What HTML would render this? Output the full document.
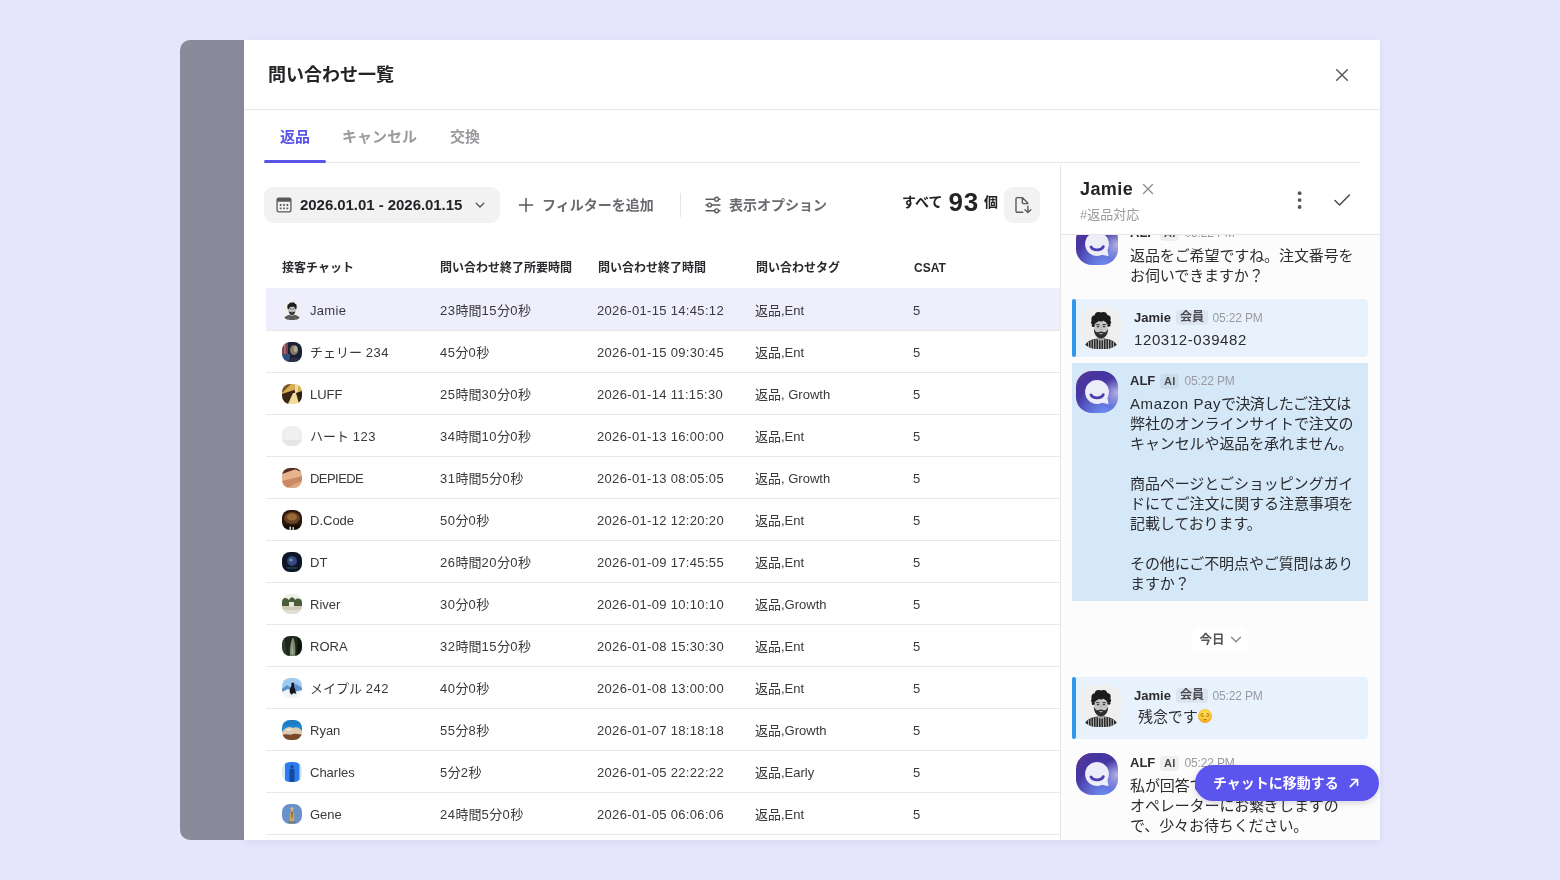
<!DOCTYPE html>
<html lang="ja">
<head>
<meta charset="utf-8">
<title>問い合わせ一覧</title>
<style>
*{box-sizing:border-box;margin:0;padding:0}
html,body{width:1560px;height:880px;overflow:hidden}
body{background:#e5e5fc;font-family:"Liberation Sans","Noto Sans CJK JP",sans-serif;color:#242428;position:relative}
.abs{position:absolute}
#strip{left:180px;top:40px;width:70px;height:800px;background:#8b8a9b;border-radius:10px 0 0 10px}
#panel{left:244px;top:40px;width:1136px;height:800px;background:#fff;overflow:hidden;box-shadow:0 2px 7px rgba(70,70,150,.08)}
#title{left:24px;top:22px;font-size:18px;font-weight:700;line-height:26px;letter-spacing:0}
#hline{left:0;top:69px;width:1136px;height:1px;background:#e8e8ea}
#close{left:1088px;top:25px}
.tab{top:85px;font-size:15px;font-weight:700;line-height:24px;color:#9a9a9e}
.tab.on{color:#5b54e8}
#tabline{left:20px;top:122px;width:1096px;height:1px;background:#e8e8ea}
#tabul{left:20px;top:120px;width:62px;height:3px;border-radius:2px;background:#5b54e8}
#datebtn{left:20px;top:147px;width:236px;height:36px;border-radius:9px;background:#f2f2f3}
.tb{margin-top:-.5px;font-size:14px;font-weight:700;line-height:20px;color:#6a6a70;white-space:nowrap}
#vsep{left:436px;top:153px;width:1px;height:24px;background:#e4e4e6}
#dl{left:760px;top:147px;width:36px;height:36px;border-radius:9px;background:#f2f2f3}
.th{top:219px;font-size:12px;font-weight:700;line-height:18px;color:#2a2a2e;white-space:nowrap}
.row{left:22px;width:794px;height:42px;border-bottom:1px solid #e9e9eb}
.row.sel{background:#efeefd;margin-top:-1px;height:43px}
.row.sel span{top:13px}
.row.sel i{top:12px}
.row span{position:absolute;top:12px;font-size:13px;line-height:20px;color:#38383d;white-space:nowrap}
.row i{position:absolute;left:16px;top:11px;width:20px;height:20px;border-radius:8px;display:block;overflow:hidden}
.row b{font-weight:400;letter-spacing:.55px}
.c1{left:44px}.c2{left:174px}.c3{left:331px;letter-spacing:.33px}.c4{left:489px}.c5{left:647px}
#side{left:817px;top:123px;width:319px;height:677px;background:#fcfcfc;overflow:hidden}
#sideline{left:816px;top:125px;width:1px;height:675px;background:#e6e6e8}
#shead{left:0;top:0;width:319px;height:72px;background:#fff;border-bottom:1px solid #e6e6e8;z-index:3}
.msg{font-size:15px;line-height:20px;color:#2c2c30;white-space:nowrap;margin-top:1px;letter-spacing:-.1px}
.msg u{text-decoration:none;letter-spacing:-.6px}
.msg b{font-weight:400;letter-spacing:.6px}
.nm{font-size:13px;font-weight:700;line-height:18px;color:#2c2c30;white-space:nowrap;margin-top:1px}
.badge{font-size:12px;font-weight:700;line-height:16px;color:#4a4a50;background:rgba(0,0,0,.05);border-radius:4px;padding:0 4px;white-space:nowrap;margin-top:.5px;line-height:15px}
.badge.ai{font-size:11px;padding:0 4px;letter-spacing:.2px;margin-top:1.5px}
.tm{font-size:12px;line-height:16px;color:#9a9aa0;white-space:nowrap;letter-spacing:-.15px;margin-left:.5px;margin-top:1px}
s{position:absolute;left:0;top:0;width:4px;height:100%;background:#2f98ea;border-radius:2px;display:block}
.alf{width:42px;height:42px;border-radius:16px;background:radial-gradient(circle at 98% 52%,rgba(190,190,236,.9) 0%,rgba(190,190,236,0) 34%),radial-gradient(circle at 66% 104%,#6f8ef2 0%,rgba(111,142,242,.6) 30%,rgba(111,142,242,0) 60%),linear-gradient(135deg,#5c3490 0%,#4636a2 30%,#4638a8 100%)}
.jam{width:42px;height:42px;border-radius:16px;overflow:hidden;background:#ececec}
</style>
</head>
<body>
<div id="root" class="abs" style="left:0;top:0;width:1560px;height:880px;will-change:transform">
<div id="strip" class="abs"></div>
<div id="panel" class="abs">
  <div id="title" class="abs">問い合わせ一覧</div>
  <svg id="close" class="abs" width="20" height="20" viewBox="0 0 20 20"><path d="M4.7 4.7 L15.3 15.3 M15.3 4.7 L4.7 15.3" stroke="#5a5a5c" stroke-width="1.5" fill="none" stroke-linecap="round"/></svg>
  <div id="hline" class="abs"></div>

  <div class="tab on abs" style="left:36px">返品</div>
  <div class="tab abs" style="left:98px">キャンセル</div>
  <div class="tab abs" style="left:206px">交換</div>
  <div id="tabline" class="abs"></div>
  <div id="tabul" class="abs"></div>

  <div id="datebtn" class="abs"></div>
  <svg class="abs" style="left:31px;top:156px" width="18" height="18" viewBox="0 0 18 18"><rect x="2.1" y="2.1" width="13.8" height="13.8" rx="1.6" fill="none" stroke="#5a5a5f" stroke-width="1.3"/><rect x="2.1" y="2.1" width="13.8" height="3.6" rx="0.8" fill="#5a5a5f"/><g fill="#5a5a5f"><rect x="4.7" y="8.1" width="1.8" height="1.8" rx=".4"/><rect x="8.1" y="8.1" width="1.8" height="1.8" rx=".4"/><rect x="11.5" y="8.1" width="1.8" height="1.8" rx=".4"/><rect x="4.7" y="11.4" width="1.8" height="1.8" rx=".4"/><rect x="8.1" y="11.4" width="1.8" height="1.8" rx=".4"/><rect x="11.5" y="11.4" width="1.8" height="1.8" rx=".4"/></g></svg>
  <div class="abs" style="left:56px;top:155px;font-size:15px;font-weight:700;line-height:20px;color:#242428;white-space:nowrap;letter-spacing:-0.05px">2026.01.01 - 2026.01.15</div>
  <svg class="abs" style="left:230px;top:159px" width="12" height="12" viewBox="0 0 12 12"><path d="M2.1 4.1 L6 8 L9.9 4.1" stroke="#4a4a50" stroke-width="1.3" fill="none" stroke-linecap="round" stroke-linejoin="round"/></svg>

  <svg class="abs" style="left:273px;top:156px" width="18" height="18" viewBox="0 0 18 18"><path d="M9 2.4 V15.6 M2.4 9 H15.6" stroke="#5a5a5f" stroke-width="1.5" fill="none" stroke-linecap="round"/></svg>
  <div class="tb abs" style="left:298px;top:155px">フィルターを追加</div>
  <div id="vsep" class="abs"></div>
  <svg class="abs" style="left:459px;top:155px" width="20" height="20" viewBox="0 0 20 20"><g stroke="#5a5a5f" stroke-width="1.4" fill="#fff" stroke-linecap="round"><path d="M3 4.2 H17 M3 10 H17 M3 15.8 H17"/><circle cx="13.6" cy="4.2" r="1.9"/><circle cx="6.6" cy="10" r="1.9"/><circle cx="13.6" cy="15.8" r="1.9"/></g></svg>
  <div class="tb abs" style="left:485px;top:155px">表示オプション</div>

  <div class="abs" style="left:658px;top:152.400px;font-size:14px;font-weight:700;line-height:20px;color:#242428;white-space:nowrap">すべて</div>
  <div class="abs" style="left:704.5px;top:146px;font-size:26px;font-weight:700;line-height:32px;color:#242428;white-space:nowrap;letter-spacing:0.8px">93</div>
  <div class="abs" style="left:740px;top:152.400px;font-size:14px;font-weight:700;line-height:20px;color:#242428;white-space:nowrap">個</div>
  <div id="dl" class="abs"></div>
  <svg class="abs" style="left:768px;top:155px" width="20" height="20" viewBox="0 0 20 20"><path d="M10.800 17.300 H5.200 a1.200 1.200 0 0 1 -1.200 -1.200 V3.800 a1.200 1.200 0 0 1 1.200 -1.200 H10.300 L15.800 8.100 V8.600 H11.300 a1 1 0 0 1 -1 -1 V2.600 M15.900 11.200 V17.400 M13 14.700 L15.900 17.600 L18.800 14.700" stroke="#5a5a5f" stroke-width="1.4" fill="none" stroke-linejoin="round" stroke-linecap="round"/></svg>

  <div class="th abs" style="left:38px">接客チャット</div>
  <div class="th abs" style="left:196px">問い合わせ終了所要時間</div>
  <div class="th abs" style="left:354px">問い合わせ終了時間</div>
  <div class="th abs" style="left:512px">問い合わせタグ</div>
  <div class="th abs" style="left:670px">CSAT</div>

  <div class="row sel abs" style="top:249px"><i style="background:#ececec"><svg width="20" height="20" viewBox="0 0 42 42"><use href="#jamface"/></svg></i><span class="c1" style="letter-spacing:.3px">Jamie</span><span class="c2"><b>23</b>時間<b>15</b>分<b>0</b>秒</span><span class="c3">2026-01-15 14:45:12</span><span class="c4">返品,Ent</span><span class="c5">5</span></div>
  <div class="row abs" style="top:291px"><i><svg width="20" height="20" viewBox="0 0 20 20"><g filter="url(#bl)"><rect width="20" height="20" fill="#1b2236"/><rect x="0" y="0" width="6" height="13" fill="#7a454c"/><rect x="2" y="2" width="1.5" height="10" fill="#b0707a"/><rect x="0" y="12" width="8" height="8" fill="#2f4f80"/><ellipse cx="12" cy="8" rx="4" ry="5" fill="#857a68"/><ellipse cx="13.5" cy="7" rx="2" ry="3" fill="#b5a890"/><path d="M6 20 C7 14 17 14 19 20Z" fill="#2a3040"/></g></svg></i><span class="c1">チェリー <b>234</b></span><span class="c2"><b>45</b>分<b>0</b>秒</span><span class="c3">2026-01-15 09:30:45</span><span class="c4">返品,Ent</span><span class="c5">5</span></div>
  <div class="row abs" style="top:333px"><i><svg width="20" height="20" viewBox="0 0 20 20"><g filter="url(#bl)"><rect width="20" height="20" fill="#d5ae55"/><path d="M0 0 H9 L0 9Z" fill="#7a5424"/><path d="M0 10 L12 6 L20 12 V20 H0Z" fill="#3a2614"/><path d="M6 20 L11 9 L14 9 L17 20Z" fill="#efdc9c"/><rect x="13" y="0" width="3" height="9" fill="#f0dca0"/><path d="M14 9 L20 7 V16Z" fill="#2e1e10"/></g></svg></i><span class="c1">LUFF</span><span class="c2"><b>25</b>時間<b>30</b>分<b>0</b>秒</span><span class="c3">2026-01-14 11:15:30</span><span class="c4">返品, Growth</span><span class="c5">5</span></div>
  <div class="row abs" style="top:375px"><i><svg width="20" height="20" viewBox="0 0 20 20"><g filter="url(#bl)"><rect width="20" height="20" fill="#ededed"/><rect x="0" y="14.5" width="20" height="1" fill="#d9d9d9"/><rect x="0" y="15.5" width="20" height="4.5" fill="#e6e6e6"/><rect x="3" y="1" width="14" height="13" rx="3" fill="#f0f0f0"/></g></svg></i><span class="c1">ハート <b>123</b></span><span class="c2"><b>34</b>時間<b>10</b>分<b>0</b>秒</span><span class="c3">2026-01-13 16:00:00</span><span class="c4">返品,Ent</span><span class="c5">5</span></div>
  <div class="row abs" style="top:417px"><i><svg width="20" height="20" viewBox="0 0 20 20"><g filter="url(#bl)"><rect width="20" height="20" fill="#5a2a20"/><path d="M0 6 L14 1 L20 4 L20 9 L0 14Z" fill="#e6b48c"/><path d="M0 13 L20 8 V14 L2 20 H0Z" fill="#c98a64"/><path d="M3 20 L20 13 V20Z" fill="#e0a880"/><path d="M10 0 H20 V4 Z" fill="#3a1812"/><path d="M0 0 H6 L0 5Z" fill="#3a1812"/></g></svg></i><span class="c1" style="letter-spacing:-.55px">DEPIEDE</span><span class="c2"><b>31</b>時間<b>5</b>分<b>0</b>秒</span><span class="c3">2026-01-13 08:05:05</span><span class="c4">返品, Growth</span><span class="c5">5</span></div>
  <div class="row abs" style="top:459px"><i><svg width="20" height="20" viewBox="0 0 20 20"><g filter="url(#bl)"><rect width="20" height="20" fill="#2a180c"/><ellipse cx="10" cy="8" rx="8" ry="6" fill="#6a4222"/><ellipse cx="10" cy="7" rx="5" ry="3.5" fill="#9a6a38"/><rect x="0" y="15" width="20" height="5" fill="#120a06"/><rect x="7.5" y="16.5" width="1.4" height="3.5" fill="#e8e8e8"/><rect x="10.5" y="17" width="1.4" height="3" fill="#d8d8d8"/></g></svg></i><span class="c1">D.Code</span><span class="c2"><b>50</b>分<b>0</b>秒</span><span class="c3">2026-01-12 12:20:20</span><span class="c4">返品,Ent</span><span class="c5">5</span></div>
  <div class="row abs" style="top:501px"><i><svg width="20" height="20" viewBox="0 0 20 20"><g filter="url(#bl)"><rect width="20" height="20" fill="#0b1326"/><circle cx="10" cy="9" r="5" fill="#27506a"/><circle cx="10" cy="9" r="3.4" fill="#4a3f95"/><circle cx="9" cy="8" r="1.6" fill="#4fb0a0"/><rect x="5" y="15.5" width="10" height="1" fill="#2a5a6a"/></g></svg></i><span class="c1">DT</span><span class="c2"><b>26</b>時間<b>20</b>分<b>0</b>秒</span><span class="c3">2026-01-09 17:45:55</span><span class="c4">返品,Ent</span><span class="c5">5</span></div>
  <div class="row abs" style="top:543px"><i><svg width="20" height="20" viewBox="0 0 20 20"><g filter="url(#bl)"><rect width="20" height="20" fill="#eef0ea"/><path d="M0 6 C3 3 5 4 7 6 C9 2 12 3 13 6 C15 4 18 4 20 7 V13 H0Z" fill="#4c5c3a"/><rect x="0" y="12" width="20" height="8" fill="#cfcab8"/><rect x="7" y="8" width="5" height="5" fill="#e8e4d8"/><rect x="0" y="16" width="20" height="4" fill="#e2dfd4"/></g></svg></i><span class="c1">River</span><span class="c2"><b>30</b>分<b>0</b>秒</span><span class="c3">2026-01-09 10:10:10</span><span class="c4">返品,Growth</span><span class="c5">5</span></div>
  <div class="row abs" style="top:585px"><i><svg width="20" height="20" viewBox="0 0 20 20"><g filter="url(#bl)"><rect width="20" height="20" fill="#1b261a"/><path d="M8 20 C7 12 9 5 11 1 C13 5 14 12 13 20Z" fill="#78866c"/><path d="M2 0 L5 20 H0 V0Z" fill="#2e3c28"/><path d="M16 0 L14.5 20 H20 V0Z" fill="#101810"/><path d="M10 3 L11.5 18 L9.5 18Z" fill="#a8b09a"/></g></svg></i><span class="c1">RORA</span><span class="c2"><b>32</b>時間<b>15</b>分<b>0</b>秒</span><span class="c3">2026-01-08 15:30:30</span><span class="c4">返品,Ent</span><span class="c5">5</span></div>
  <div class="row abs" style="top:627px"><i><svg width="20" height="20" viewBox="0 0 20 20"><g filter="url(#bl)"><rect width="20" height="20" fill="#9fcbf0"/><path d="M0 11 L5 7 L9 10 L14 6 L20 10 V20 H0Z" fill="#5f8fc8"/><path d="M0 14 L6 11 L12 14 L20 12 V20 H0Z" fill="#eef4fa"/><path d="M8 15 C7 11 9 9 10 6.5 C11.5 5.5 13 7 12 9 C14 11 13 14 14.5 16 L11 15 L10 17Z" fill="#181820"/><circle cx="10.8" cy="6" r="1.6" fill="#181820"/></g></svg></i><span class="c1">メイプル <b>242</b></span><span class="c2"><b>40</b>分<b>0</b>秒</span><span class="c3">2026-01-08 13:00:00</span><span class="c4">返品,Ent</span><span class="c5">5</span></div>
  <div class="row abs" style="top:669px"><i><svg width="20" height="20" viewBox="0 0 20 20"><g filter="url(#bl)"><rect width="20" height="20" fill="#1e88d2"/><rect x="0" y="0" width="20" height="5" fill="#1a7cc6"/><path d="M0 12 C3 7 8 6 11 8 C14 6 18 8 20 11 V20 H0Z" fill="#dccbb0"/><path d="M0 15 C5 13 8 16 11 14 C14 13 17 15 20 14 V20 H0Z" fill="#7a4a2c"/><path d="M4 11 C6 8 9 8 10 10Z" fill="#f2e8d8"/></g></svg></i><span class="c1">Ryan</span><span class="c2"><b>55</b>分<b>8</b>秒</span><span class="c3">2026-01-07 18:18:18</span><span class="c4">返品,Growth</span><span class="c5">5</span></div>
  <div class="row abs" style="top:711px"><i><svg width="20" height="20" viewBox="0 0 20 20"><g filter="url(#bl)"><rect width="20" height="20" fill="#2b7cf0"/><rect x="0" y="0" width="3" height="20" fill="#dbe8fb"/><rect x="17.5" y="0" width="2.5" height="20" fill="#dbe8fb"/><path d="M7.5 20 V9 C7.5 7 8.5 6.5 10 6.5 C11.5 6.5 12.5 7 12.5 9 V20Z" fill="#184a9c"/><circle cx="10" cy="4.6" r="1.7" fill="#184a9c"/></g></svg></i><span class="c1">Charles</span><span class="c2"><b>5</b>分<b>2</b>秒</span><span class="c3">2026-01-05 22:22:22</span><span class="c4">返品,Early</span><span class="c5">5</span></div>
  <div class="row abs" style="top:753px"><i><svg width="20" height="20" viewBox="0 0 20 20"><g filter="url(#bl)"><rect width="20" height="20" fill="#6b92ca"/><path d="M8 17 C7 12 8 8 10 5 C12 8 13 12 12 17Z" fill="#c9a85c"/><circle cx="10" cy="4.6" r="1.6" fill="#d8bc74"/><path d="M6 17.5 H14 V19 H6Z" fill="#8a7a50"/><path d="M9 8 L11 8 L10.5 14 L9.5 14Z" fill="#8a6a30"/></g></svg></i><span class="c1">Gene</span><span class="c2"><b>24</b>時間<b>5</b>分<b>0</b>秒</span><span class="c3">2026-01-05 06:06:06</span><span class="c4">返品,Ent</span><span class="c5">5</span></div>

  <div id="sideline" class="abs"></div>
  <div id="side" class="abs">
    <svg width="0" height="0" style="position:absolute"><defs>
<filter id="bl2" x="-5%" y="-5%" width="110%" height="110%"><feGaussianBlur stdDeviation="0.35"/></filter>
<filter id="bl" x="-10%" y="-10%" width="120%" height="120%"><feGaussianBlur stdDeviation="0.6"/></filter>
<symbol id="jamface" viewBox="0 0 42 42"><rect width="42" height="42" fill="#efefef"/><g filter="url(#bl2)"><path d="M3.5 43 C4.5 34.5 12 31.2 21 31.2 C30 31.2 37.5 34.5 38.5 43 Z" fill="#2b2b2b"/><g stroke="#cfcfcf" stroke-width="0.8"><path d="M8.5 35 V43 M11 33.6 V43 M13.5 32.6 V43 M16 32 V43 M18.5 31.6 V43 M21 31.5 V43 M23.500 31.6 V43 M26 32 V43 M28.500 32.6 V43 M31 33.600 V43 M33.500 35 V43"/></g><path d="M17.500 27 H24.500 V32.5 C22.500 34 19.500 34 17.500 32.500 Z" fill="#a9a9a9"/><ellipse cx="21" cy="19.800" rx="7.200" ry="9" fill="#c6c6c6"/><path d="M13.800 21.500 C14 28.500 17.500 31.400 21 31.400 C24.500 31.400 28 28.500 28.200 21.500 C26.800 25.200 24.600 25.600 23.600 25.200 C22 24.400 20 24.400 18.400 25.200 C17.400 25.600 15.200 25.200 13.800 21.500 Z" fill="#2e2e2e"/><path d="M18.800 26.600 C20 25.800 22 25.800 23.200 26.600 C22.400 27.600 19.600 27.600 18.800 26.600Z" fill="#b4b4b4"/><g fill="#1c1c1c"><circle cx="15.200" cy="12" r="3.800"/><circle cx="18.600" cy="9" r="3.900"/><circle cx="23.400" cy="8.800" r="3.900"/><circle cx="27" cy="11.600" r="3.700"/><circle cx="13.400" cy="15.600" r="2.400"/><circle cx="28.700" cy="15.400" r="2.400"/><circle cx="21" cy="11" r="3.600"/><circle cx="13.200" cy="18.400" r="1.500"/><circle cx="28.900" cy="18.200" r="1.500"/></g><path d="M16.200 17.700 H19.600 M22.400 17.700 H25.800" stroke="#2a2a2a" stroke-width="1"/><path d="M16.800 19.600 H19.200 M22.800 19.600 H25.200" stroke="#3a3a3a" stroke-width="1.100"/><path d="M21 19 V23" stroke="#a8a8a8" stroke-width="0.900"/></g></symbol>
<symbol id="alfface" viewBox="0 0 42 42"><circle cx="21" cy="21" r="11.9" fill="#edecf9"/><path d="M31.200 26 L32.500 32.400 C32.600 33 32.200 33.300 31.700 33.100 L24.500 31.600 Z" fill="#edecf9"/><path d="M15 23.900 C17 28 25.300 28 27.300 23.600" stroke="#4a40b4" stroke-width="2.8" fill="none" stroke-linecap="round"/></symbol>
</defs></svg>
    <div id="shead" class="abs">
    <div class="abs" style="left:19px;top:13px;font-size:18px;font-weight:700;line-height:26px;color:#242428;letter-spacing:0.4px">Jamie</div>
    <svg class="abs" style="left:80px;top:19px" width="14" height="14" viewBox="0 0 14 14"><path d="M2.5 2.5 L11.5 11.5 M11.5 2.5 L2.5 11.5" stroke="#8a8a90" stroke-width="1.3" fill="none" stroke-linecap="round"/></svg>
    <div class="abs" style="left:19px;top:43px;font-size:13px;line-height:18px;color:#9a9aa0;white-space:nowrap">#返品対応</div>
    <svg class="abs" style="left:228px;top:27px" width="20" height="20" viewBox="0 0 20 20"><g fill="#55555a"><circle cx="10.6" cy="3.2" r="1.9"/><circle cx="10.6" cy="10.1" r="1.9"/><circle cx="10.6" cy="17" r="1.9"/></g></svg>
    <svg class="abs" style="left:271px;top:27px" width="20" height="20" viewBox="0 0 20 20"><path d="M3 10.5 L7.6 15 L17.4 5" stroke="#4a4a50" stroke-width="1.5" fill="none" stroke-linecap="round" stroke-linejoin="round"/></svg>
    </div>
    <div class="alf abs" style="left:15px;top:60px"><svg width="42" height="42" viewBox="0 0 42 42"><use href="#alfface"/></svg></div>
    <div class="nm abs" style="left:69px;top:60px">ALF</div>
    <div class="badge ai abs" style="left:99px;top:61px">AI</div>
    <div class="tm abs" style="left:123px;top:61px">05:22 PM</div>
    <div class="msg abs" style="left:69px;top:82px">返品をご希望ですね。注文番号を</div>
    <div class="msg abs" style="left:69px;top:102px">お伺いできますか？</div>
    <div class="abs" style="left:11px;top:136px;width:296px;height:58px;background:#e8f2fc;border-radius:4px"><s></s></div>
    <div class="jam abs" style="left:19px;top:144px"><svg width="42" height="42" viewBox="0 0 42 42"><use href="#jamface"/></svg></div>
    <div class="nm abs" style="left:73px;top:145px">Jamie</div>
    <div class="badge abs" style="left:115px;top:146px">会員</div>
    <div class="tm abs" style="left:151px;top:146px">05:22 PM</div>
    <div class="msg abs" style="left:73px;top:166px"><b>120312-039482</b></div>
    <div class="abs" style="left:11px;top:200px;width:296px;height:238px;background:#d5e8f8"></div>
    <div class="alf abs" style="left:15px;top:208px"><svg width="42" height="42" viewBox="0 0 42 42"><use href="#alfface"/></svg></div>
    <div class="nm abs" style="left:69px;top:208px">ALF</div>
    <div class="badge ai abs" style="left:99px;top:209px">AI</div>
    <div class="tm abs" style="left:123px;top:209px">05:22 PM</div>
    <div class="msg abs" style="left:69px;top:230px"><b>Amazon Pay</b><u>で決済したご注文は</u></div>
    <div class="msg abs" style="left:69px;top:250px">弊社のオンラインサイトで注文の</div>
    <div class="msg abs" style="left:69px;top:270px">キャンセルや返品を承れません。</div>
    <div class="msg abs" style="left:69px;top:310px">商品ページとごショッピングガイ</div>
    <div class="msg abs" style="left:69px;top:330px">ドにてご注文に関する注意事項を</div>
    <div class="msg abs" style="left:69px;top:350px">記載しております。</div>
    <div class="msg abs" style="left:69px;top:390px">その他にご不明点やご質問はあり</div>
    <div class="msg abs" style="left:69px;top:410px">ますか？</div>
    <div class="abs" style="left:131px;top:464px;width:56px;height:24px;background:#fff;border-radius:8px"></div>
    <div class="abs" style="left:139px;top:468px;font-size:12.5px;font-weight:700;line-height:16px;color:#55555a;white-space:nowrap;margin:.5px 0 0 -.5px">今日</div>
    <svg class="abs" style="left:169px;top:470px" width="12" height="12" viewBox="0 0 12 12"><path d="M1.5 3.8 L6 8.3 L10.5 3.8" stroke="#85858b" stroke-width="1.3" transform="translate(0 .4)" fill="none" stroke-linecap="round" stroke-linejoin="round"/></svg>
    <div class="abs" style="left:11px;top:514px;width:296px;height:62px;background:#e8f2fc;border-radius:4px"><s></s></div>
    <div class="jam abs" style="left:19px;top:522px"><svg width="42" height="42" viewBox="0 0 42 42"><use href="#jamface"/></svg></div>
    <div class="nm abs" style="left:73px;top:523px">Jamie</div>
    <div class="badge abs" style="left:115px;top:524px">会員</div>
    <div class="tm abs" style="left:151px;top:524px">05:22 PM</div>
    <div class="msg abs" style="left:77px;top:543px">残念です<svg width="14" height="14" viewBox="0 0 14 14" style="vertical-align:-1.300px;margin-left:.4px" role="img" aria-label="😔"><defs><radialGradient id="emo" cx="50%" cy="35%" r="65%"><stop offset="0" stop-color="#ffe458"/><stop offset=".6" stop-color="#fcc93a"/><stop offset="1" stop-color="#f4a020"/></radialGradient></defs><circle cx="7" cy="7" r="7" fill="url(#emo)"/><g stroke="#8a5610" stroke-width="0.8" fill="none" stroke-linecap="round"><path d="M3 5.500 L5.200 4.600 M11 5.500 L8.800 4.600"/><path d="M3.300 6.900 Q4.700 8.200 6 7 M8 7 Q9.300 8.200 10.700 6.900"/><path d="M5.900 10.700 Q7 10.100 8.100 10.700"/></g></svg></div>
    <div class="alf abs" style="left:15px;top:590px"><svg width="42" height="42" viewBox="0 0 42 42"><use href="#alfface"/></svg></div>
    <div class="nm abs" style="left:69px;top:590px">ALF</div>
    <div class="badge ai abs" style="left:99px;top:591px">AI</div>
    <div class="tm abs" style="left:123px;top:591px">05:22 PM</div>
    <div class="msg abs" style="left:69px;top:612px">私が回答できない内容のため、</div>
    <div class="msg abs" style="left:69px;top:632px">オペレーターにお繋ぎしますの</div>
    <div class="msg abs" style="left:69px;top:652px">で、少々お待ちください。</div>
    <div class="abs" style="left:134px;top:602px;width:184px;height:36px;border-radius:18px;background:#5c54ee;box-shadow:0 2px 6px rgba(40,40,90,.18);margin-left:-.5px;z-index:4"></div>
    <div class="abs" style="left:152px;top:610px;font-size:14px;font-weight:700;line-height:20px;color:#fff;white-space:nowrap;z-index:5">チャットに移動する</div>
    <svg class="abs" style="left:287px;top:614px;z-index:5" width="12" height="12" viewBox="0 0 12 12"><path d="M2.3 9.7 L9.3 2.7 M3.8 2.5 H9.5 V8.2" stroke="#fff" stroke-width="1.7" fill="none" stroke-linecap="round" stroke-linejoin="round"/></svg>
  </div>
</div>
</div>
</body>
</html>
